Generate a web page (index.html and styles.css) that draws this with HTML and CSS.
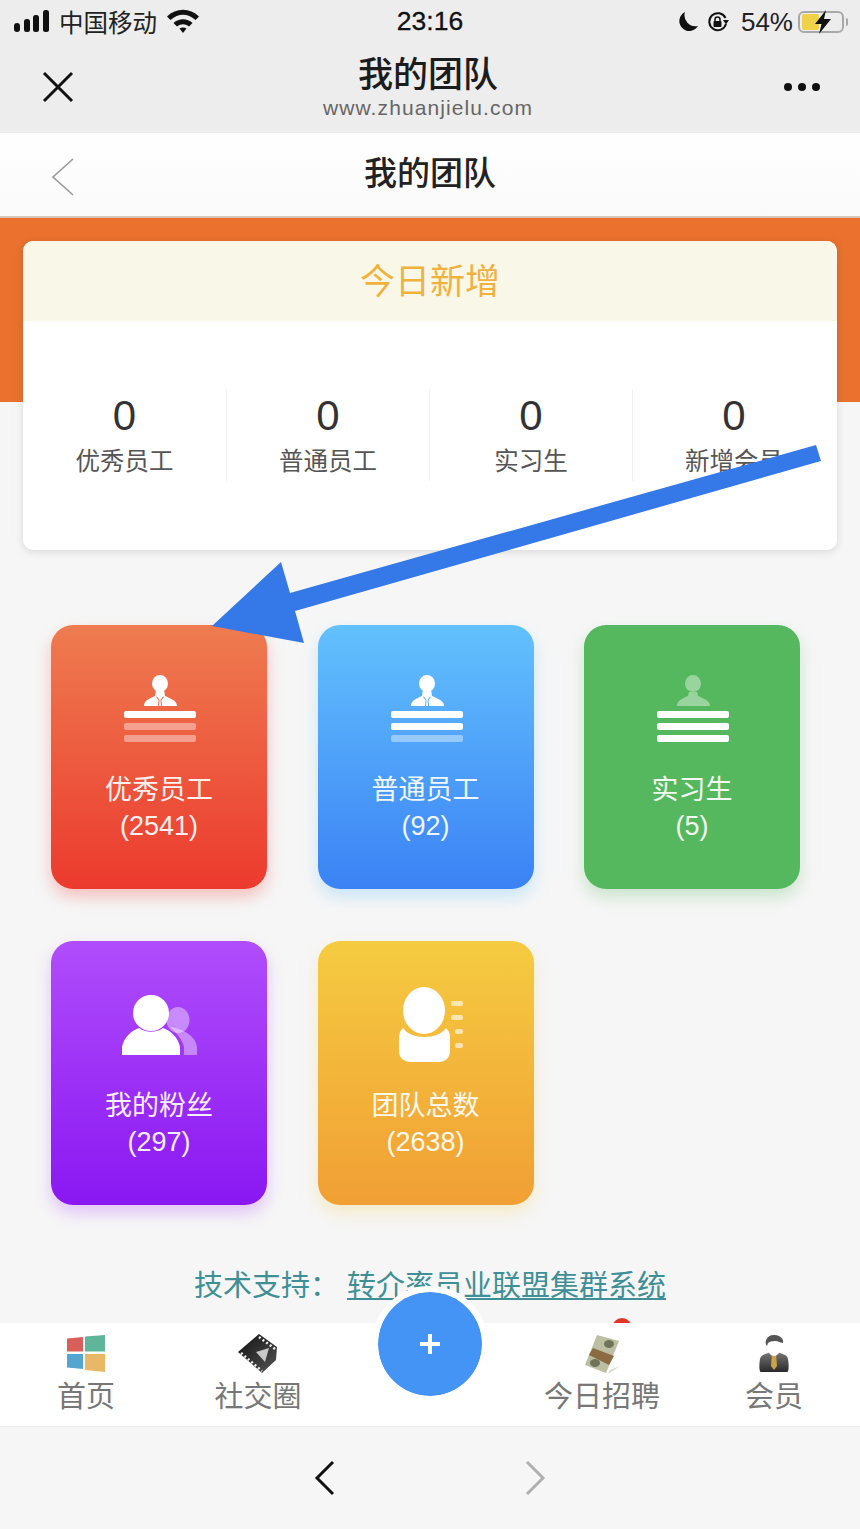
FILE: index.html
```html
<!DOCTYPE html>
<html lang="zh-CN">

<head>
  <meta charset="UTF-8">
  <meta name="viewport" content="width=device-width, initial-scale=1.0">
  <title>我的团队</title>
  <link rel="stylesheet" href="styles.css">
</head>

<body>

  <div id="page">

    <!-- phone status bar + in-app browser bar -->
    <div class="browser-top">
      <div class="status-bar">
        <div class="status-side status-left">
          <svg class="signal" width="35" height="22" viewBox="0 0 35 22">
            <rect x="0" y="13" width="6" height="9" rx="3" />
            <rect x="10" y="9" width="6" height="13" rx="2.500" />
            <rect x="19" y="5" width="6" height="17" rx="2.500" />
            <rect x="29" y="0" width="6" height="22" rx="2.500" />
          </svg>
          <span class="carrier">中国移动</span>
          <svg class="wifi" width="32" height="24" viewBox="0 0 32 24">
            <path d="M0 7.500 C9 -1.500 23 -1.500 32 7.500 L28.500 11 C20.500 4 11.500 4 3.500 11 Z" />
            <path d="M6.500 14 C12 9 20 9 25.500 14 L22 17.500 C18 14.500 14 14.500 10 17.500 Z" />
            <path d="M12.500 19.500 C14.500 18 17.500 18 19.500 19.500 L16 24 Z" />
          </svg>
        </div>
        <div class="clock">23:16</div>
        <div class="status-side status-right">
          <svg class="moon" width="20" height="20" viewBox="0 0 20 20">
            <path d="M7 0 A10 10 0 1 0 20 14 A11 11 0 0 1 7 0 Z" />
          </svg>
          <svg class="rotate-lock" width="21" height="20" viewBox="0 0 21 20">
            <path d="M18 12 A8.500 8.500 0 1 1 17.500 6" fill="none" stroke="#111" stroke-width="2" />
            <path d="M15 8 H21 L18 12.500 Z" />
            <rect x="5.500" y="9" width="8" height="6" rx="1" />
            <path d="M7 9 V7.500 A2.500 2.500 0 0 1 12 7.500 V9" fill="none" stroke="#111" stroke-width="1.500" />
          </svg>
          <span class="battery-text">54%</span>
          <div class="battery">
            <div class="battery-fill"></div>
            <svg class="bolt" width="16" height="24" viewBox="0 0 16 24">
              <path d="M11 0 L0 14 H6.500 L4 24 L16 9 H9 Z" />
            </svg>
          </div>
          <div class="battery-tip"></div>
        </div>
      </div>
      <div class="browser-nav">
        <svg class="close-icon" width="32" height="32" viewBox="0 0 32 32">
          <path d="M2 2 L30 30 M30 2 L2 30" />
        </svg>
        <div class="browser-title">
          <div class="browser-name">我的团队</div>
          <div class="browser-url">www.zhuanjielu.com</div>
        </div>
        <div class="more-dots"><i></i><i></i><i></i></div>
      </div>
    </div>

    <div class="app-header">
      <svg class="back-icon" width="24" height="40" viewBox="0 0 24 40">
        <path d="M22 2 L2 20 L22 38" />
      </svg>
      <h1>我的团队</h1>
    </div>

    <section class="today">
      <div class="today-card">
        <div class="today-title">今日新增</div>
        <div class="today-stats">
          <div class="stat"><b>0</b><span>优秀员工</span></div>
          <div class="stat"><b>0</b><span>普通员工</span></div>
          <div class="stat"><b>0</b><span>实习生</span></div>
          <div class="stat"><b>0</b><span>新增会员</span></div>
        </div>
      </div>
    </section>

    <section class="team-grid">
      <div class="team-card red">
        <svg class="icon-staff" width="72" height="67" viewBox="0 0 72 67">
          <ellipse cx="36" cy="8.500" rx="8" ry="8.500" />
          <path fill-rule="evenodd" d="M20 31 C20 26 24 24 31 21 L32 14 H40 L41 21 C48 24 53 26 53 31 Z M32 22 L34.500 25 L34 31 H35 L35.500 25 L33 21.500 Z M40 22 L37.500 25 L38 31 H37 L36.500 25 L39 21.500 Z" />
          <rect y="36" width="72" height="7" rx="2" />
          <rect class="dim" y="48" width="72" height="7" rx="2" />
          <rect class="dim" y="60" width="72" height="7" rx="2" />
        </svg>
        <div class="team-name">优秀员工</div>
        <div class="team-num">(2541)</div>
      </div>
      <div class="team-card blue">
        <svg class="icon-staff" width="72" height="67" viewBox="0 0 72 67">
          <ellipse cx="36" cy="8.500" rx="8" ry="8.500" />
          <path fill-rule="evenodd" d="M20 31 C20 26 24 24 31 21 L32 14 H40 L41 21 C48 24 53 26 53 31 Z M32 22 L34.500 25 L34 31 H35 L35.500 25 L33 21.500 Z M40 22 L37.500 25 L38 31 H37 L36.500 25 L39 21.500 Z" />
          <rect y="36" width="72" height="7" rx="2" />
          <rect y="48" width="72" height="7" rx="2" />
          <rect class="dim" y="60" width="72" height="7" rx="2" />
        </svg>
        <div class="team-name">普通员工</div>
        <div class="team-num">(92)</div>
      </div>
      <div class="team-card green">
        <svg class="icon-staff" width="72" height="67" viewBox="0 0 72 67">
          <ellipse class="dim" cx="36" cy="8.500" rx="8" ry="8.500" />
          <path class="dim" d="M20 31 C20 26 24 24 31 21 L32 17 H40 L41 21 C48 24 53 26 53 31 Z" />
          <rect y="36" width="72" height="7" rx="2" />
          <rect y="48" width="72" height="7" rx="2" />
          <rect y="60" width="72" height="7" rx="2" />
        </svg>
        <div class="team-name">实习生</div>
        <div class="team-num">(5)</div>
      </div>
      <div class="team-card purple">
        <svg class="icon-fans" width="76" height="60" viewBox="0 0 76 60">
          <ellipse class="dim" cx="56" cy="25" rx="11.500" ry="13" />
          <path class="dim" d="M48 32 C62 34 75 42 75 53 V60 H62 V52 C60 44 54 37 48 32 Z" />
          <circle cx="29" cy="18" r="18" />
          <path d="M0 60 V52 C2 42 9 36 17 33 C24 38 34 38 41 33 C49 36 56 42 58 52 V60 Z" />
        </svg>
        <div class="team-name">我的粉丝</div>
        <div class="team-num">(297)</div>
      </div>
      <div class="team-card yellow">
        <svg class="icon-total" width="64" height="75" viewBox="0 0 64 75">
          <ellipse cx="25" cy="23.500" rx="21" ry="23.500" />
          <path d="M4 41 C12 53 39 53 47 41 C50 44 51 47 51 50 V64 C51 71 46 75 40 75 H12 C5 75 0 71 0 64 V50 C0 47 1 44 4 41 Z" />
          <rect class="faint" x="52" y="14" width="12" height="5" rx="2" />
          <rect class="faint" x="52" y="28" width="12" height="5" rx="2" />
          <rect class="faint" x="56" y="42" width="8" height="5" rx="2" />
          <rect class="faint" x="56" y="56" width="8" height="5" rx="2" />
        </svg>
        <div class="team-name">团队总数</div>
        <div class="team-num">(2638)</div>
      </div>
    </section>

    <div class="support">
      <span>技术支持：</span><a href="#">转介率员业联盟集群系统</a>
    </div>

    <nav class="tab-bar">
      <span class="badge"></span>
      <a class="tab" href="#">
        <svg width="40" height="40" viewBox="0 0 40 40">
          <path fill="#d9605a" d="M1 4.500 L17 3 V17.500 H1 Z" />
          <path fill="#5fb59a" d="M19 2.500 L39 1 V17.500 H19 Z" />
          <path fill="#54a6d0" d="M1 20 H17 V35 L1 33.500 Z" />
          <path fill="#e9b866" d="M19 20 H39 V38 L19 36 Z" />
        </svg>
        <span>首页</span>
      </a>
      <a class="tab" href="#">
        <svg width="40" height="40" viewBox="0 0 40 40">
          <defs>
            <linearGradient id="film" x1="0" y1="0" x2="1" y2="1">
              <stop offset="0" stop-color="#111" />
              <stop offset="1" stop-color="#555" />
            </linearGradient>
          </defs>
          <path fill="url(#film)" d="M0 18 L21 0 L39 13 L38 26 L24 39 Z" />
          <path fill="#c8c8c8" d="M18 18 L31 14 L27 28 Z" />
          <path fill="none" stroke="#eee" stroke-width="2.500" stroke-dasharray="2 2.500" d="M21 3 L37 15 M3 19 L24 37" />
        </svg>
        <span>社交圈</span>
      </a>
      <div class="tab tab-spacer"></div>
      <a class="tab" href="#">
        <svg width="40" height="40" viewBox="0 0 40 40">
          <path fill="#d8d8d0" d="M28 36 L38 32 L26 40 Z" />
          <path fill="#bdbfa2" d="M15 1 L37 7 L24 39 L3 31 Z" />
          <ellipse cx="27" cy="10" rx="5" ry="4" fill="#6f7357" />
          <ellipse cx="13" cy="29" rx="5" ry="4" fill="#6f7357" />
          <path fill="#8a6b43" d="M11 14 L32 22 L27 31 L7 21 Z" />
        </svg>
        <span>今日招聘</span>
      </a>
      <a class="tab" href="#">
        <svg width="40" height="40" viewBox="0 0 40 40">
          <defs>
            <linearGradient id="suit" x1="0" y1="0" x2="0" y2="1">
              <stop offset="0" stop-color="#777" />
              <stop offset="1" stop-color="#2a2a2a" />
            </linearGradient>
          </defs>
          <path fill="url(#suit)" d="M7 38 C5 38 5 30 6 25 C7 20 13 20 16 18 H24 C27 20 33 20 34 25 C35 30 35 38 33 38 Z" />
          <path fill="#c9a24a" d="M18 19 H22 L23 32 L20 36 L17 32 Z" />
          <path fill="#fff" d="M14 9 H26 V15 C26 19 23 22 20 22 C17 22 14 19 14 15 Z" />
          <path fill="#555" d="M13 12 C10 9 12 1 20 1 C28 1 30 7 29 9 L25 8 C22 6 16 7 14 9 Z" />
        </svg>
        <span>会员</span>
      </a>
      <div class="fab"><span class="fab-plus"></span></div>
    </nav>

    <div class="browser-bottom">
      <svg class="nav-arrow" width="22" height="36" viewBox="0 0 22 36">
        <path d="M19 2 L3 18 L19 34" />
      </svg>
      <svg class="nav-arrow nav-off" width="22" height="36" viewBox="0 0 22 36">
        <path d="M3 2 L19 18 L3 34" />
      </svg>
    </div>

    <!-- blue arrow drawn on top of the screenshot -->
    <svg class="annotation" width="860" height="1529" viewBox="0 0 860 1529">
      <path fill="#3578e8" d="M816 445 L821 461 L295 611 L304 643 L212 626 L281 562 L290 593 Z" />
    </svg>

  </div>

</body>

</html>
```

FILE: styles.css
```css
* {
  box-sizing: border-box;
}

body {
  margin: 0;
  background-color: #f6f6f6;
  font-family: "Liberation Sans", "Noto Sans CJK SC", sans-serif;
}

a {
  color: inherit;
}

#page {
  position: relative;
  display: flex;
  flex-direction: column;
  width: 860px;
  height: 1529px;
  overflow: hidden;
}

/* browser chrome */
.browser-top {
  height: 133px;
  background-color: #ededed;
  color: #111;
}

.status-bar {
  display: flex;
  align-items: center;
  justify-content: space-between;
  height: 44px;
  padding: 0 12px 0 14px;
}

.status-side {
  display: flex;
  align-items: center;
  font-size: 24.5px;
}

.status-side svg {
  fill: #111;
}

.status-left {
  width: 298px;
  gap: 10px;
}

.status-right {
  justify-content: flex-end;
  width: 300px;
}

.signal,
.wifi {
  margin-top: -2px;
}

.carrier {
  color: #222;
  margin-top: -1px;
}

.clock {
  font-size: 26.5px;
  -webkit-text-stroke: 0.3px #111;
  margin-top: -1px;
}

.moon {
  margin-right: 10px;
}

.rotate-lock {
  margin-right: 12px;
}

.battery-text {
  color: #222;
  font-size: 26px;
  margin-right: 5px;
}

.battery {
  position: relative;
  width: 46px;
  height: 22px;
  border: 2px solid #a8a8a8;
  border-radius: 6px;
  padding: 1px 2px;
}

.battery-fill {
  width: 17px;
  height: 16px;
  border-radius: 2px;
  background-color: #f0d24a;
}

.bolt {
  position: absolute;
  left: 15px;
  top: -3px;
}

.battery-tip {
  width: 2px;
  height: 8px;
  margin-left: 2px;
  background-color: #a8a8a8;
  border-radius: 0 2px 2px 0;
}

.browser-nav {
  display: flex;
  align-items: center;
  justify-content: space-between;
  height: 89px;
  padding: 0 40px 4px 42px;
}

.close-icon path {
  fill: none;
  stroke: #111;
  stroke-width: 3;
}

.browser-title {
  margin-right: 2px;
  text-align: center;
}

.browser-name {
  font-size: 35px;
  line-height: 42px;
  font-weight: 500;
  color: #1c1c1c;
}

.browser-url {
  font-size: 21px;
  line-height: 23px;
  color: #666;
  letter-spacing: 1.1px;
}

.more-dots {
  display: flex;
  gap: 6px;
}

.more-dots i {
  width: 8px;
  height: 8px;
  border-radius: 50%;
  background-color: #111;
}

/* page header */
.app-header {
  position: relative;
  display: flex;
  align-items: center;
  justify-content: center;
  height: 85px;
  padding-bottom: 8px;
  background: linear-gradient(#fff, #fafafa);
  border-bottom: 2px solid #d6c6bd;
}

.app-header h1 {
  margin: 0;
  font-size: 33px;
  font-weight: 500;
  color: #222;
}

.back-icon {
  position: absolute;
  left: 51px;
  top: 24px;
}

.back-icon path {
  fill: none;
  stroke: #999;
  stroke-width: 1.6;
}

/* today card */
.today {
  padding: 23px 23px 0;
  background: linear-gradient(#ea712e 184px, transparent 184px);
}

.today-card {
  height: 309px;
  background-color: #fff;
  border-radius: 10px;
  overflow: hidden;
  box-shadow: 0 2px 8px rgba(0, 0, 0, 0.12);
}

.today-title {
  height: 80px;
  line-height: 82px;
  background-color: #f9f7e8;
  color: #f0b23c;
  font-size: 35px;
  text-align: center;
}

.today-stats {
  display: grid;
  grid-template-columns: repeat(4, 1fr);
  padding: 68px 2px 0 0;
}

.stat {
  display: flex;
  flex-direction: column;
  align-items: center;
  height: 92px;
  border-left: 1px solid #f1f1f1;
}

.stat:first-child {
  border-left: none;
}

.stat b {
  font-size: 42px;
  line-height: 54px;
  font-weight: 400;
  color: #333;
}

.stat span {
  margin-top: 1px;
  font-size: 24.5px;
  line-height: 36px;
  color: #555;
}

/* team cards */
.team-grid {
  display: grid;
  grid-template-columns: repeat(3, 216px);
  grid-auto-rows: 264px;
  gap: 52px 50.5px;
  padding: 75px 0 0 51px;
}

.team-card {
  display: flex;
  flex-direction: column;
  align-items: center;
  padding-top: 50px;
  border-radius: 22px;
  color: #fff;
}

.team-card svg {
  fill: #fff;
}

.team-card .dim {
  opacity: 0.4;
}

.team-card .faint {
  opacity: 0.6;
}

.team-name {
  margin-top: 30px;
  font-size: 27px;
  line-height: 36px;
  opacity: 0.92;
}

.team-num {
  font-size: 27px;
  line-height: 36px;
  opacity: 0.92;
}

.icon-staff {
  margin-left: 2px;
}

.icon-fans {
  margin-top: 20px;
  margin-left: 2px;
}

.icon-fans + .team-name {
  margin-top: 33px;
}

.purple {
  padding-top: 34px;
}

.icon-total {
  margin-top: -4px;
  margin-left: 10px;
}

.icon-total + .team-name {
  margin-top: 26px;
}

.red {
  background: linear-gradient(#ee7c50, #ec3a2e);
  box-shadow: 0 8px 16px rgba(236, 58, 46, 0.28);
}

.blue {
  background: linear-gradient(#63c1fd, #3b82f5);
  box-shadow: 0 8px 16px rgba(99, 193, 253, 0.3);
}

.green {
  background-color: #56b85e;
  box-shadow: 0 8px 16px rgba(86, 184, 94, 0.28);
}

.purple {
  background: linear-gradient(#b04dfb, #8a17f2);
  box-shadow: 0 8px 16px rgba(176, 77, 251, 0.3);
}

.yellow {
  background: linear-gradient(#f5cb41, #f19f34);
  box-shadow: 0 8px 16px rgba(245, 203, 65, 0.25);
}

/* support line */
.support {
  display: flex;
  justify-content: center;
  gap: 8px;
  margin-top: 61px;
  height: 40px;
  line-height: 40px;
  font-size: 29px;
  color: #3f8f96;
  white-space: nowrap;
}

.support a {
  text-decoration: underline;
}

/* tab bar */
.tab-bar {
  position: relative;
  display: grid;
  grid-template-columns: repeat(5, 1fr);
  margin-top: 17px;
  height: 104px;
  background-color: #fff;
  border-bottom: 1px solid #eee;
}

.badge {
  position: absolute;
  left: 612px;
  top: -5px;
  width: 20px;
  height: 20px;
  border-radius: 50%;
  background-color: #e0352b;
  z-index: -1;
}

.tab {
  display: flex;
  flex-direction: column;
  align-items: center;
  padding-top: 11px;
  text-decoration: none;
  color: #777;
  font-size: 29px;
  line-height: 38px;
}

.tab svg {
  display: block;
  flex: none;
  margin-bottom: 4px;
}

.fab {
  position: absolute;
  left: 372px;
  top: -37px;
  display: flex;
  align-items: center;
  justify-content: center;
  width: 116px;
  height: 116px;
  border: 6px solid #fff;
  border-radius: 50%;
  background-color: #4394f4;
  background-clip: padding-box;
}

.fab-plus {
  position: relative;
  width: 20px;
  height: 4px;
  background-color: #fff;
}

.fab-plus::after {
  content: "";
  position: absolute;
  left: 8px;
  top: -8px;
  width: 4px;
  height: 20px;
  background-color: #fff;
}

/* bottom browser bar */
.browser-bottom {
  display: flex;
  align-items: center;
  justify-content: center;
  gap: 188px;
  flex: 1;
  background-color: #f6f6f6;
}

.nav-arrow path {
  fill: none;
  stroke: #111;
  stroke-width: 3;
}

.nav-off path {
  stroke: #b0b0b0;
}

.annotation {
  position: absolute;
  left: 0;
  top: 0;
  pointer-events: none;
}
```
